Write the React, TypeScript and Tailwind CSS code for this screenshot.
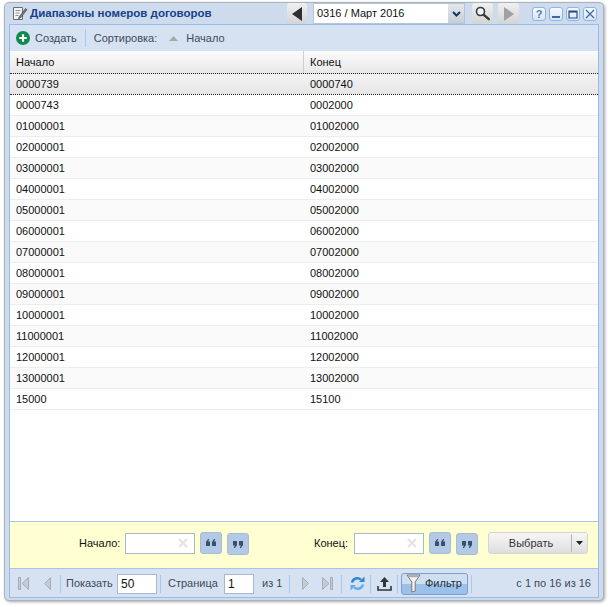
import type { ReactNode } from "react";

const rows = [
  ["0000739", "0000740"],
  ["0000743", "0002000"],
  ["01000001", "01002000"],
  ["02000001", "02002000"],
  ["03000001", "03002000"],
  ["04000001", "04002000"],
  ["05000001", "05002000"],
  ["06000001", "06002000"],
  ["07000001", "07002000"],
  ["08000001", "08002000"],
  ["09000001", "09002000"],
  ["10000001", "10002000"],
  ["11000001", "11002000"],
  ["12000001", "12002000"],
  ["13000001", "13002000"],
  ["15000", "15100"],
];

function Sep({ className = "" }: { className?: string }) {
  return <div className={`h-[18px] w-px shrink-0 bg-[#a9c8ef] ${className}`} />;
}

function WinBtn({ children }: { children: ReactNode }) {
  return (
    <div className="flex h-[14px] w-[14px] shrink-0 items-center justify-center rounded-[3px] border border-[#8fb4e3] bg-gradient-to-b from-[#f6f9fd] to-[#d8e5f5]">
      <svg width="10" height="10" viewBox="0 0 10 10">
        {children}
      </svg>
    </div>
  );
}

function NavBtn({ children, className = "" }: { children: ReactNode; className?: string }) {
  return (
    <div className={`flex h-[21px] shrink-0 items-center justify-center rounded-[3px] bg-gradient-to-b from-[#f0f0f0] to-[#d4d4d4] ${className}`}>
      {children}
    </div>
  );
}

function ClearInput() {
  return (
    <div className="flex h-[21px] w-[70px] shrink-0 items-center justify-end border border-[#a9b9cc] bg-white pr-[6px]">
      <svg width="10" height="10" viewBox="0 0 10 10">
        <path d="M1 1l8 8M9 1l-8 8" stroke="#e3e3e3" strokeWidth="2.2" />
      </svg>
    </div>
  );
}

function QuoteBtn({ close, className = "" }: { close?: boolean; className?: string }) {
  return (
    <div className={`flex h-[22px] w-[22px] shrink-0 items-center justify-center rounded-[3px] border border-[#a3bedd] bg-[#b3c9e4] ${className}`}>
      <svg width="10" height="7" viewBox="0 0 10 7" className={close ? "mt-[2px]" : "-mt-[2px]"}>
        {close ? (
          <path d="M0 0h4v4l-2 3H0.8l1-2.6H0zM6 0h4v4l-2 3H6.8l1-2.6H6z" fill="#36506f" />
        ) : (
          <path d="M4 7H0V3l2-3h1.2l-1 2.6H4zM10 7H6V3l2-3h1.2l-1 2.6H10z" fill="#36506f" />
        )}
      </svg>
    </div>
  );
}

export default function App() {
  return (
    <div className="h-[607px] w-[608px] bg-white pl-[4px] pt-[2px] font-['Liberation_Sans',Arial,sans-serif] text-[11px] text-[#111]">
      <div className="flex h-[599px] w-[600px] flex-col rounded-[5px] border border-[#aab4bf] bg-[#cddbec] px-[4px] pb-[2px] shadow-[1px_1px_3px_rgba(0,0,0,0.35)]">
        {/* title bar */}
        <div className="flex h-[21px] shrink-0 items-center">
          <svg width="17" height="17" viewBox="0 0 17 17" className="ml-[2px] shrink-0">
            <path d="M2.5 2.5h9v12h-9z" fill="#f4f4f4" stroke="#6b6f75" />
            <path d="M4.5 5.5h5M4.5 8h4M4.5 10.5h3" stroke="#8d9197" />
            <path d="M8 12l6.5-8.5 1.5 1.2L9.5 13l-2 .8z" fill="#777" stroke="#3e4246" strokeWidth="0.6" />
          </svg>
          <div className="ml-[2px] flex-1 text-[11.5px] font-bold whitespace-nowrap text-[#15428b]">Диапазоны номеров договоров</div>
          <NavBtn className="w-[20px]">
            <svg width="11" height="14" viewBox="0 0 11 14">
              <path d="M10 0v14L0 7z" fill="#2c2f33" />
            </svg>
          </NavBtn>
          <div className="ml-[6px] flex h-[21px] w-[152px] shrink-0 border border-[#b5c4d6] bg-white">
            <div className="flex-1 pl-[3px] leading-[19px] text-[#111]">0316 / Март 2016</div>
            <div className="flex w-[16px] items-center justify-center bg-gradient-to-b from-[#e4e8ec] to-[#c8ced5]">
              <svg width="9" height="6" viewBox="0 0 9 6">
                <path d="M1 1l3.5 3.5L8 1" fill="none" stroke="#15356b" strokeWidth="2" />
              </svg>
            </div>
          </div>
          <NavBtn className="ml-[7px] w-[21px]">
            <svg width="17" height="17" viewBox="0 0 17 17">
              <circle cx="6.5" cy="6.5" r="4" fill="#eef3f8" stroke="#33383d" strokeWidth="1.6" />
              <path d="M9.8 9.8l5 4.4" stroke="#33383d" strokeWidth="2.4" strokeLinecap="round" />
            </svg>
          </NavBtn>
          <NavBtn className="ml-[5px] w-[21px]">
            <svg width="11" height="14" viewBox="0 0 11 14">
              <path d="M1 0v14l10-7z" fill="#9ea2a6" />
            </svg>
          </NavBtn>
          <div className="ml-[13px] mr-[2px] flex items-center gap-[3px]">
            <WinBtn>
              <text x="5" y="9" textAnchor="middle" fontSize="11" fontWeight="700" fill="#4f7bb5" fontFamily="Liberation Sans">?</text>
            </WinBtn>
            <WinBtn>
              <path d="M1 7h8v2H1z" fill="#3f689f" />
            </WinBtn>
            <WinBtn>
              <path d="M1 2h8v7H1z" fill="none" stroke="#244f8b" strokeWidth="1.2" />
              <path d="M1 2h8v1.6H1z" fill="#244f8b" />
            </WinBtn>
            <WinBtn>
              <path d="M1 1l8 8M9 1l-8 8" stroke="#3f689f" strokeWidth="1.2" />
            </WinBtn>
          </div>
        </div>

        {/* panel */}
        <div className="flex min-h-0 flex-1 flex-col border border-[#99bbe8] bg-white">
          {/* toolbar */}
          <div className="flex h-[26px] shrink-0 items-center bg-[#d6e2f2] pl-[6px] text-[#3e4a58]">
            <svg width="14" height="14" viewBox="0 0 14 14" className="shrink-0">
              <circle cx="7" cy="7" r="7" fill="#0d8a4e" />
              <path d="M7 3.2v7.6M3.2 7h7.6" stroke="#fff" strokeWidth="2.2" />
            </svg>
            <span className="ml-[5px]">Создать</span>
            <Sep className="ml-[8px]" />
            <span className="ml-[8px]">Сортировка:</span>
            <svg width="9" height="5" viewBox="0 0 9 5" className="ml-[12px] shrink-0">
              <path d="M4.5 0L9 5H0z" fill="#a5a9ae" />
            </svg>
            <span className="ml-[8px]">Начало</span>
          </div>

          {/* grid header */}
          <div className="flex h-[22px] shrink-0 bg-gradient-to-b from-[#fbfbfb] to-[#e8e8e8] leading-[22px]">
            <div className="w-[294px] border-r border-[#cfcfcf] pl-[6px]">Начало</div>
            <div className="flex-1 pl-[6px]">Конец</div>
          </div>

          {/* rows */}
          <div className="min-h-0 flex-1">
            {rows.map((row, i) => (
              <div
                key={row[0]}
                className={`flex leading-[20px] ${
                  i === 0
                    ? "h-[22px] border-y border-dotted border-y-[#222] bg-gradient-to-b from-[#f3f3f3] to-[#e6e6e6]"
                    : i % 2 === 1
                      ? "h-[21px] border-b border-[#ededed] bg-white"
                      : "h-[21px] border-b border-[#ededed] bg-[#fafafa]"
                }`}
              >
                <div className="w-[294px] pl-[6px]">{row[0]}</div>
                <div className="flex-1 pl-[6px]">{row[1]}</div>
              </div>
            ))}
          </div>

          {/* filter form */}
          <div className="flex h-[48px] shrink-0 items-center border-y border-[#a9c4e8] bg-[#ffffd2] pb-[4px] pl-[69px]">
            <span className="w-[42px] whitespace-nowrap">Начало:</span>
            <div className="ml-[4px]"><ClearInput /></div>
            <QuoteBtn className="ml-[5px]" />
            <QuoteBtn close className="ml-[5px] mt-[1px]" />
            <span className="ml-[65px] w-[36px] whitespace-nowrap">Конец:</span>
            <div className="ml-[4px]"><ClearInput /></div>
            <QuoteBtn className="ml-[5px]" />
            <QuoteBtn close className="ml-[5px] mt-[1px]" />
            <div className="ml-[10px] flex h-[22px] w-[100px] shrink-0 items-center rounded-[3px] border border-[#d4d4d4] bg-gradient-to-b from-[#f7f7f7] to-[#dedede] text-[#333]">
              <div className="flex-1 pl-[2px] text-center">Выбрать</div>
              <div className="h-[18px] w-px bg-[#b5b5b5]" />
              <svg width="15" height="4" viewBox="0 0 15 4" className="shrink-0">
                <path d="M4 0h7L7.5 4z" fill="#222" />
              </svg>
            </div>
          </div>

          {/* pager */}
          <div className="flex h-[28px] shrink-0 items-center bg-[#d6e2f2] pt-[1px] text-[#3e4a58]">
            <svg width="11" height="13" viewBox="0 0 11 13" className="ml-[8px] shrink-0">
              <path d="M0.5 0.5h2v12h-2z" fill="#c4cbd3" stroke="#a5adb6" />
              <path d="M10.5 0.5v12L4 6.5z" fill="#c4cbd3" stroke="#a5adb6" />
            </svg>
            <svg width="7" height="13" viewBox="0 0 7 13" className="ml-[15px] shrink-0">
              <path d="M6.5 0.5v12L0.5 6.5z" fill="#c4cbd3" stroke="#a5adb6" />
            </svg>
            <Sep className="ml-[9px]" />
            <span className="ml-[5px] w-[47px] shrink-0 whitespace-nowrap">Показать</span>
            <div className="ml-[4px] h-[20px] w-[40px] shrink-0 border border-[#a9b9cc] bg-white pl-[3px] text-[12px] leading-[19px] text-[#111]">50</div>
            <Sep className="ml-[3px]" />
            <span className="ml-[7px] w-[49px] shrink-0 whitespace-nowrap">Страница</span>
            <div className="ml-[7px] h-[20px] w-[30px] shrink-0 border border-[#a9b9cc] bg-white pl-[3px] text-[12px] leading-[19px] text-[#111]">1</div>
            <span className="ml-[8px] w-[20px] shrink-0 whitespace-nowrap">из 1</span>
            <Sep className="ml-[7px]" />
            <svg width="7" height="13" viewBox="0 0 7 13" className="ml-[12px] shrink-0">
              <path d="M0.5 0.5v12l6-6z" fill="#c4cbd3" stroke="#a5adb6" />
            </svg>
            <svg width="11" height="13" viewBox="0 0 11 13" className="ml-[13px] shrink-0">
              <path d="M0.5 0.5v12L7 6.5z" fill="#c4cbd3" stroke="#a5adb6" />
              <path d="M8.5 0.5h2v12h-2z" fill="#c4cbd3" stroke="#a5adb6" />
            </svg>
            <Sep className="ml-[8px]" />
            <svg width="15" height="15" viewBox="0 0 15 15" className="ml-[8px] shrink-0">
              <path d="M2 6.5A5.5 5.5 0 0 1 11 3.6" fill="none" stroke="#2f86d2" strokeWidth="2.4" />
              <path d="M9 6h5.5V0.5z" fill="#2f86d2" />
              <path d="M13 8.5A5.5 5.5 0 0 1 4 11.4" fill="none" stroke="#5aaef0" strokeWidth="2.4" />
              <path d="M6 9H0.5v5.5z" fill="#5aaef0" />
            </svg>
            <Sep className="ml-[5px]" />
            <svg width="15" height="14" viewBox="0 0 15 14" className="ml-[6px] shrink-0">
              <path d="M7.5 0L12 5H9v5H6V5H3z" fill="#2e3439" />
              <path d="M1 9v4h13V9" fill="none" stroke="#2e3439" strokeWidth="1.6" />
            </svg>
            <Sep className="ml-[5px]" />
            <div className="ml-[3px] flex h-[22px] w-[67px] shrink-0 items-center overflow-hidden rounded-[3px] border border-[#7f9fc9] bg-[linear-gradient(to_bottom,#cfdff2_0%,#cfdff2_48%,#9cc0ea_48%,#9cc0ea_100%)] text-[#26303c]">
              <svg width="15" height="19" viewBox="0 0 15 19" className="ml-[4px] shrink-0">
                <path d="M1 1h13L9.2 8v9L5.8 18V8z" fill="#f2f2f2" stroke="#777" />
                <path d="M2 2.5h11" stroke="#aaa" strokeWidth="1.5" />
              </svg>
              <span className="ml-[4px]">Фильтр</span>
            </div>
            <Sep className="ml-[3px]" />
            <span className="ml-auto pr-[7px] whitespace-nowrap">с 1 по 16 из 16</span>
          </div>
        </div>
      </div>
    </div>
  );
}
